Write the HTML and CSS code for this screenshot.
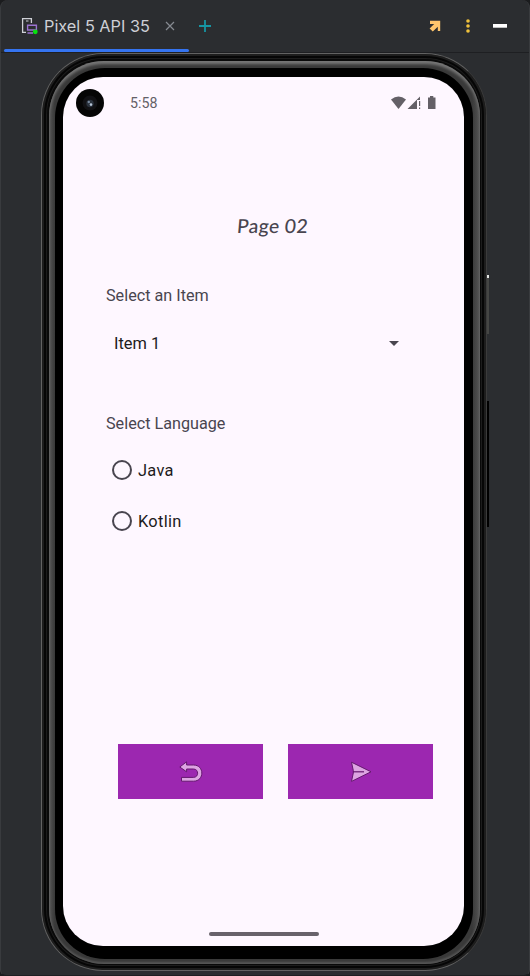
FILE: index.html
```html
<!DOCTYPE html>
<html lang="en">
<head>
<meta charset="utf-8">
<title>Pixel 5 API 35</title>
<link rel="stylesheet" href="styles.css">
</head>
<body>
<div class="window">
  <header class="toolbar">
    <div class="tab">
      <svg class="device-icon" width="18" height="18" viewBox="0 0 18 18" fill="none">
        <path d="M5 15.4H1.6V1.6H10.4V6" stroke="#ced0d6" stroke-width="1.3"/>
        <path d="M5 4H7.5" stroke="#ced0d6" stroke-width="1.2"/>
        <path d="M6.6 8.2H15.4V13H6.6ZM6.5 16H12" stroke="#9b72d0" stroke-width="1.4"/>
        <circle cx="14.3" cy="14.8" r="2.4" fill="#08e010"/>
      </svg>
      <span class="tab-name">Pixel 5 API 35</span>
      <svg class="close-icon" width="10" height="10" viewBox="0 0 10 10"><path d="M1 1L9 9M9 1L1 9" stroke="#868a91" stroke-width="1.2"/></svg>
    </div>
    <svg class="add-icon" width="12" height="12" viewBox="0 0 12 12"><path d="M6 0V12M0 6H12" stroke="#1695a3" stroke-width="1.8"/></svg>
    <div class="tools">
      <svg width="12" height="12" viewBox="0 0 12 12"><path d="M1 .8H11.2V11H8.8V6.8L3.8 11.5L.6 8.5L5.2 4H1Z" fill="#ffc66d"/></svg>
      <svg class="more" width="4" height="14" viewBox="0 0 4 14" fill="#f0c23c"><circle cx="2" cy="2" r="1.8"/><circle cx="2" cy="7" r="1.8"/><circle cx="2" cy="12" r="1.8"/></svg>
      <svg class="minimize" width="14" height="4" viewBox="0 0 14 4"><path d="M0 0H14V3.7H0Z" fill="#fff"/></svg>
    </div>
  </header>
  <main class="stage">
    <div class="phone">
      <i class="side volume"></i>
      <i class="side power"></i>
      <div class="band">
        <div class="bezel">
          <div class="screen">
            <div class="status">
              <span class="camera"><svg width="28" height="28" viewBox="0 0 28 28"><circle cx="14" cy="14" r="14" fill="#050505"/><circle cx="14" cy="14" r="7.5" fill="#111114"/><circle cx="14" cy="14.5" r="3.7" fill="#29313c"/><circle cx="12.8" cy="13" r="1.2" fill="#75869b"/><circle cx="15" cy="15.6" r="1.3" fill="#b8c6d8"/></svg></span>
              <span class="time">5:58</span>
              <svg class="signals" width="46" height="14" viewBox="0 0 46 14" fill="#646067">
                <path d="M0 3.4Q7.5 -2.2 15 3.4L7.5 13Z"/>
                <path d="M16.5 13L29 .5V4H26V13Z"/>
                <path d="M28 5H29.2V10H28ZM28 11.5H29.2V13H28Z"/>
                <path d="M37 1.5H39V0H42.3V1.5H44.5V13H37Z"/>
              </svg>
            </div>
            <h1 class="title">Page 02</h1>
            <section class="form">
              <div class="label">Select an Item</div>
              <div class="spinner"><span>Item 1</span><svg width="10" height="5" viewBox="0 0 10 5"><path d="M0 0H10L5 5Z" fill="#49454f"/></svg></div>
              <div class="label language">Select Language</div>
              <div class="option"><i class="radio"></i><span>Java</span></div>
              <div class="option"><i class="radio"></i><span>Kotlin</span></div>
            </section>
            <div class="actions">
              <div class="button">
                <svg width="24" height="22" viewBox="0 0 24 22"><path d="M.8 6L7.6 .8V4H14.5C25.6 4 25.6 20.2 14.5 20.2H2.5V16.4H14.5C20 16.4 20 8 14.5 8H7.6V10.8Z" fill="#dda5e2" stroke="#65186f" stroke-width="1"/></svg>
              </div>
              <div class="button">
                <svg width="22" height="22" viewBox="0 0 22 22"><path d="M1.5 1.2L21 10.8L1.5 20.4L3.3 12V9.6Z" fill="#dda5e2" stroke="#65186f" stroke-width="1"/><path d="M3 10.8H14" stroke="#65186f" stroke-width="1.2"/></svg>
              </div>
            </div>
            <div class="home"></div>
          </div>
        </div>
      </div>
    </div>
  </main>
</div>
</body>
</html>
```
FILE: styles.css
```css
* { box-sizing: border-box; }
body { margin: 0; background: #1b1c1e; font-family: Roboto, sans-serif; }
.window { width: 530px; height: 976px; background: #2b2d30; border: 1px solid #393b3e; border-top: 0; border-bottom-color: #1e1f22; border-radius: 8px 8px 6px 6px; overflow: hidden; }
.toolbar { display: flex; height: 53px; border-bottom: 1px solid #1e1f22; }
.tab { display: flex; align-items: center; width: 185px; height: 52px; margin-left: 3px; padding-left: 17px; position: relative; }
.tab::after { content: ""; position: absolute; left: 0; bottom: 0; width: 185px; height: 3px; border-radius: 2px; background: #3574f0; }
.tab-name { margin-left: 5px; width: 107px; font: 16.3px Inter, sans-serif; color: #ced0d6; white-space: nowrap; }
.close-icon { margin-left: 14px; }
.add-icon { margin: 20px 0 0 10px; }
.tools { display: flex; align-items: center; height: 52px; margin: 0 22px 0 auto; }
.more { margin-left: 25px; }
.minimize { margin-left: 23px; }
.stage { padding-left: 40px; }
.phone { position: relative; width: 446px; height: 918px; padding: 7px 6px 6px 7px; border: 1px solid #626262; border-right-color: #3b3b3b; border-radius: 62px; background: #090909; box-shadow: inset 0 0 0 2px #1d1d1d, inset 0 0 0 4px #060606, inset 0 0 0 5px #1c1c1c; }
.side { position: absolute; left: 445px; width: 2px; }
.volume { top: 221px; height: 59px; background: #454644; border-top: 3px solid #e4e6e4; }
.power { top: 347px; height: 126px; background: #000; }
.band { height: 903px; padding: 7px 7px 5px 6px; border-radius: 55px; background: linear-gradient(90deg, #555, #393939 6px, #393939 423px, #555); box-shadow: inset 0 3px 3px #777, inset 0 -2px 2px #555; }
.bezel { height: 891px; padding: 9px 9px 13px 8px; border-radius: 50px; background: #000; }
.screen { display: flex; flex-direction: column; width: 401px; height: 869px; border-radius: 40px; background: #fef7ff; color: #1d1b20; overflow: hidden; }
.status { display: flex; align-items: center; height: 28px; margin-top: 12px; padding-left: 13px; }
.camera { width: 28px; height: 28px; }
.time { margin-left: 26px; font-size: 14.2px; color: #646067; }
.signals { margin: 0 27px 0 auto; }
.title { align-self: center; height: 28px; margin: 95px 0 0; padding-left: 18px; font: 500 19.3px/28px Lato, sans-serif; letter-spacing: .4px; color: #49454f; transform: skewX(-5deg); }
.form { margin: 44px 64px 0 43px; font-size: 16.4px; }
.label { height: 24px; line-height: 24px; font-size: 16.2px; color: #49454f; white-space: nowrap; }
.spinner { display: flex; align-items: center; justify-content: space-between; height: 24px; margin: 23px 1px 0 8px; }
.language { margin-top: 57px; }
.option { display: flex; align-items: center; height: 24px; margin: 22px 0 0 6px; gap: 6px; letter-spacing: .3px; }
.option + .option { margin-top: 27px; }
.radio { width: 20px; height: 20px; border: 2px solid #49454f; border-radius: 50%; }
.actions { display: flex; gap: 25px; margin: 211px 0 0 55px; }
.button { display: flex; align-items: center; justify-content: center; width: 145px; height: 55px; background: #9c27b0; }
.home { width: 110px; height: 4px; margin: auto auto 10px 146px; border-radius: 2px; background: #68626b; }
```
